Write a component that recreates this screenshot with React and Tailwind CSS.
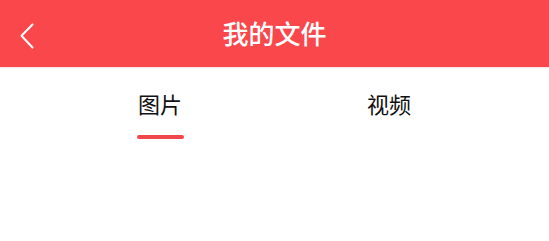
import React, { useState } from 'react';

const tabs = ['图片', '视频'];

const App = () => {
  const [active, setActive] = useState(0);

  return (
    <div className="w-[549px] h-[241px] bg-white font-['Noto_Sans_CJK_SC',sans-serif]">
      {/* Header */}
      <div className="relative h-[67px] bg-[#fa474c] flex items-center justify-center shadow-[0_1px_1px_rgba(250,71,76,0.15)]">
        <button className="absolute left-[14px] top-[17px] p-[6px]">
          <svg width="14" height="26" viewBox="0 0 14 26" fill="none">
            <path d="M12.5 1.5 L1.5 12.8 L12.5 24.5" stroke="white" strokeWidth="2" strokeLinecap="round" strokeLinejoin="round" />
          </svg>
        </button>
        <h1 className="text-white text-[26px] font-medium leading-none mb-[1px]">我的文件</h1>
      </div>

      {/* Tabs */}
      <div className="flex px-[45.5px]">
        {tabs.map((t, i) => (
          <button
            key={t}
            onClick={() => setActive(i)}
            className="flex-1 flex flex-col items-center pt-[25px]"
          >
            <span className="text-[22px] leading-none text-[#111]">{t}</span>
            <span
              className={`mt-[21px] h-[4px] w-[47px] rounded-full ${i === active ? 'bg-[#f0474c]' : 'bg-transparent'}`}
            />
          </button>
        ))}
      </div>
    </div>
  );
};

export default App;
